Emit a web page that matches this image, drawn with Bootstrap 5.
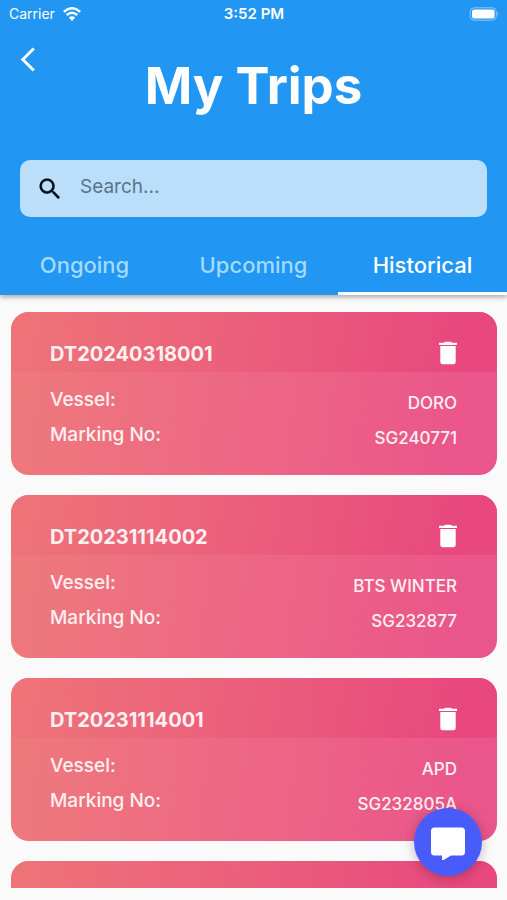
<!DOCTYPE html>
<html lang="en">
<head>
<meta charset="utf-8">
<meta name="viewport" content="width=device-width, initial-scale=1">
<title>My Trips</title>
<link href="https://cdn.jsdelivr.net/npm/bootstrap@5.3.0/dist/css/bootstrap.min.css" rel="stylesheet">
<style>
body { background: #fafafa; font-family: Inter, "Liberation Sans", sans-serif; }
svg { display: block; }
.app-header { background: #2196f3; box-shadow: 0 2px 5px rgba(0,0,0,.35); z-index: 1; }
.status-bar { height: 28px; padding: 0 8px 0 9px; font-size: 14px; line-height: 20px; }
.status-time { font-size: 15px; font-weight: 600; }
.title-row { height: 132px; padding: 16px 20px; }
.back-btn { width: 16px; height: 32px; }
.page-title { font-size: 51px; line-height: 84px; font-weight: 700; }
.search-box { height: 57px; margin: 0 20px; padding: 0 16px; gap: 16px; border-radius: 10px; background: #bbdffb; }
.search-box input, .search-box input:focus { font-size: 19px; line-height: 28px; color: #2b4a62; padding: 0 0 3px; background: none; }
.search-box input::placeholder { color: #58748b; opacity: 1; }
.trip-tabs { padding-top: 18px; }
.trip-tabs .nav-link { height: 60px; padding: 0; border-bottom: 3px solid transparent; border-radius: 0; font-size: 22px; line-height: 60px; font-weight: 500; color: #a3dbfd; }
.trip-tabs .nav-link.active { color: #fff; border-color: #fff; }
.trip-list { padding: 17px 10px 0 11px; margin-bottom: 12px; gap: 20px; }
.trip-card { border: 0; border-radius: 18px; color: #fff0f2; background: linear-gradient(97deg, #ee7a7b 0%, #ed6685 52%, #ea568b 92%); }
.trip-head { height: 60px; padding: 22px 40px 0 39px; border-radius: 18px 18px 4px 4px; background: linear-gradient(97deg, #ee7478 0%, #eb5e7b 50%, #e8487e 92%); }
.trip-id { font-size: 20px; line-height: 40px; font-weight: 700; }
.trip-body { padding: 11px 40px 22px 39px; }
.trip-body dl { line-height: 34px; font-weight: 500; }
.trip-body dt { font-size: 19px; font-weight: 500; }
.trip-body dd { font-size: 17px; padding-top: 6px; line-height: 29px; }
.chat-btn { right: 25px; bottom: 24px; width: 68px; height: 68px; background: #485cfb; box-shadow: 0 2px 12px rgba(0,0,0,.25); z-index: 2; }
</style>
</head>
<body>
<div class="d-flex flex-column vh-100 overflow-hidden">
  <header class="app-header position-relative flex-shrink-0 text-white">
    <div class="status-bar row g-0 align-items-center">
      <div class="col d-flex align-items-center gap-2">
        <span>Carrier</span>
        <svg width="18" height="14" viewBox="0 0 18 14" fill="none" stroke="#fff" stroke-width="2.4" aria-hidden="true"><path d="M.8 4.9Q9-2.5 17.2 4.9M3.7 8Q9 3.3 14.3 8"/><path d="M9 14 5.8 10.6Q9 8 12.2 10.6Z" fill="#fff" stroke="none"/></svg>
      </div>
      <div class="col-auto status-time">3:52 PM</div>
      <div class="col d-flex justify-content-end">
        <svg width="30" height="14" viewBox="0 0 30 14" aria-hidden="true"><rect x="1.3" y=".8" width="26" height="12.4" rx="3.8" fill="none" stroke="#8dc8f9" stroke-width="1"/><rect x="3" y="2.5" width="22.6" height="9" rx="2" fill="#fff"/><path d="M28.5 5q2 2 0 4z" fill="#8dc8f9"/></svg>
      </div>
    </div>
    <div class="title-row d-flex align-items-start">
      <button type="button" class="back-btn btn p-0 border-0 rounded-0" aria-label="Back">
        <svg width="16" height="32" viewBox="0 0 16 32" fill="none" stroke="#fff" stroke-width="3"><path d="M13.8 4.5 2.8 15.5l11 11"/></svg>
      </button>
      <h1 class="page-title flex-grow-1 text-center mb-0 me-3">My Trips</h1>
    </div>
    <form class="search-box d-flex align-items-center" role="search">
      <label for="trip-search" aria-label="Search trips">
        <svg width="28" height="28" viewBox="0 0 24 24" fill="#050b10"><path stroke="#050b10" stroke-width=".2" d="M15.5 14h-.79l-.28-.27A6.47 6.47 0 0 0 16 9.5 6.5 6.5 0 1 0 9.5 16c1.61 0 3.09-.59 4.23-1.57l.27.28v.79l5 4.99L20.49 19zm-6 0C7.01 14 5 11.99 5 9.5S7.01 5 9.5 5 14 7.01 14 9.5 11.99 14 9.5 14z"/></svg>
      </label>
      <input type="search" id="trip-search" class="form-control border-0 shadow-none" placeholder="Search...">
    </form>
    <nav class="trip-tabs d-flex text-center">
      <a href="#ongoing" class="nav-link col">Ongoing</a>
      <a href="#upcoming" class="nav-link col">Upcoming</a>
      <a href="#historical" class="nav-link col active" aria-current="page">Historical</a>
    </nav>
  </header>

  <main class="trip-list d-flex flex-column flex-grow-1 overflow-hidden">
    <article class="trip-card card flex-shrink-0">
      <div class="trip-head d-flex justify-content-between">
        <h2 class="trip-id mb-0">DT20240318001</h2>
        <button type="button" class="btn p-0 border-0 align-self-start" aria-label="Delete trip DT20240318001"><svg width="18" height="38" viewBox="0 0 18 38" fill="#fff"><path d="M0 8.8V11H18V8.8H13L11.8 7.8H6.2L5 8.8ZM1.3 12V28Q1.3 30.2 3.5 30.2H14.5Q16.7 30.2 16.7 28V12Z"/></svg></button>
      </div>
      <div class="trip-body">
        <dl class="d-flex justify-content-between mb-0"><dt>Vessel:</dt><dd class="mb-0">DORO</dd></dl>
        <dl class="d-flex justify-content-between mb-0"><dt>Marking No:</dt><dd class="mb-0">SG240771</dd></dl>
      </div>
    </article>
    <article class="trip-card card flex-shrink-0">
      <div class="trip-head d-flex justify-content-between">
        <h2 class="trip-id mb-0">DT20231114002</h2>
        <button type="button" class="btn p-0 border-0 align-self-start" aria-label="Delete trip DT20231114002"><svg width="18" height="38" viewBox="0 0 18 38" fill="#fff"><path d="M0 8.8V11H18V8.8H13L11.8 7.8H6.2L5 8.8ZM1.3 12V28Q1.3 30.2 3.5 30.2H14.5Q16.7 30.2 16.7 28V12Z"/></svg></button>
      </div>
      <div class="trip-body">
        <dl class="d-flex justify-content-between mb-0"><dt>Vessel:</dt><dd class="mb-0">BTS WINTER</dd></dl>
        <dl class="d-flex justify-content-between mb-0"><dt>Marking No:</dt><dd class="mb-0">SG232877</dd></dl>
      </div>
    </article>
    <article class="trip-card card flex-shrink-0">
      <div class="trip-head d-flex justify-content-between">
        <h2 class="trip-id mb-0">DT20231114001</h2>
        <button type="button" class="btn p-0 border-0 align-self-start" aria-label="Delete trip DT20231114001"><svg width="18" height="38" viewBox="0 0 18 38" fill="#fff"><path d="M0 8.8V11H18V8.8H13L11.8 7.8H6.2L5 8.8ZM1.3 12V28Q1.3 30.2 3.5 30.2H14.5Q16.7 30.2 16.7 28V12Z"/></svg></button>
      </div>
      <div class="trip-body">
        <dl class="d-flex justify-content-between mb-0"><dt>Vessel:</dt><dd class="mb-0">APD</dd></dl>
        <dl class="d-flex justify-content-between mb-0"><dt>Marking No:</dt><dd class="mb-0">SG232805A</dd></dl>
      </div>
    </article>
    <article class="trip-card card flex-shrink-0">
      <div class="trip-head"></div>
    </article>
  </main>
</div>
<button type="button" class="chat-btn btn position-fixed rounded-circle border-0 p-0 d-flex align-items-center justify-content-center" aria-label="Open chat">
  <svg width="36" height="36" viewBox="0 0 36 36" fill="#fff"><path d="M4.5 3.5H31.5Q35 3.5 35 7V28Q35 31.5 31.5 31.5H21L12 37V31.5H4.5Q1 31.5 1 28V7Q1 3.5 4.5 3.5Z"/></svg>
</button>
<script src="https://cdn.jsdelivr.net/npm/bootstrap@5.3.0/dist/js/bootstrap.bundle.min.js"></script>
</body>
</html>
